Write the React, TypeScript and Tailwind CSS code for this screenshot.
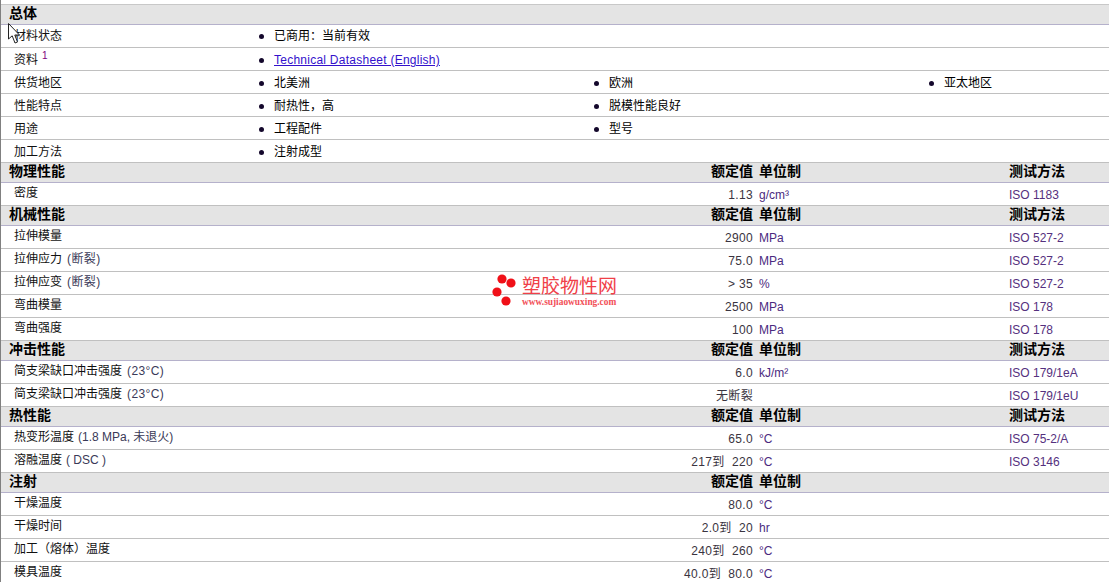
import React from "react"

const sans = "font-['Liberation_Sans','Noto_Sans_CJK_SC',sans-serif]"

function Head({ title, cols, test = true }: { title: string; cols?: boolean; test?: boolean }) {
  return (
    <div className="grid h-[20px] grid-cols-[752px_256px_1fr] items-center border-b border-[#b5b1cb] bg-[#e4e4e4] pb-[3px] text-[14px] leading-[16px] font-bold text-black">
      <div className="flex justify-between pl-[8px]">
        <span>{title}</span>
        {cols && <span>额定值</span>}
      </div>
      <span className="pl-[6px]">{cols && "单位制"}</span>
      <span>{cols && test && "测试方法"}</span>
    </div>
  )
}

function Info({ label, sup, first, items }: { label: string; sup?: boolean; first?: boolean; items: React.ReactNode[] }) {
  return (
    <div className={`grid h-[23px] grid-cols-[258px_335px_335px_1fr] items-center border-b border-[#c0c0c0] text-[12px] ${first ? "" : "pt-[2px]"}`}>
      <span className="pl-[13px] text-[#111]">
        {label}
        {sup && <sup className="ml-[4px] text-[10px] text-[#800080]">1</sup>}
      </span>
      {[0, 1, 2].map((i) => (
        <span key={i} className="flex items-center">
          {items[i] && <span className="mr-[10px] size-[5px] rounded-full bg-[#14082c]" />}
          {items[i]}
        </span>
      ))}
    </div>
  )
}

function Prop({ label, note, plainNote, value, unit, test }: { label: string; note?: string; plainNote?: string; value: string; unit?: string; test?: string }) {
  return (
    <div className="grid h-[23px] grid-cols-[752px_256px_1fr] items-center border-b border-[#c0c0c0] text-[12px]">
      <div className="flex justify-between pl-[13px]">
        <span className="-translate-y-[1px] text-[#111]">
          {label}
          {note && <span className="ml-[5px] tracking-[0.4px] text-[#3a3a58]">{note}</span>}
          {plainNote && <span className="ml-[4px] text-[#3a3a58]">{plainNote}</span>}
        </span>
        <span className="translate-y-[1px] tracking-[0.33px] whitespace-pre text-[#3a3440]">{value}</span>
      </div>
      <span className="translate-y-[1px] pl-[6px] text-[#4b2a80]">{unit}</span>
      <span className="translate-y-[1px] text-[#55307e]">{test}</span>
    </div>
  )
}

export default function App() {
  return (
    <div className={`relative h-[582px] w-[1109px] overflow-hidden border-l border-[#808080] bg-white pt-[4px] ${sans}`}>
      <div className="border-t border-[#c8c8c8]">
        <Head title="总体" />
        <Info first label="材料状态" items={["已商用：当前有效"]} />
        <Info label="资料" sup items={[<a className="tracking-[0.25px] text-[#3311cc] underline">Technical Datasheet (English)</a>]} />
        <Info label="供货地区" items={["北美洲", "欧洲", "亚太地区"]} />
        <Info label="性能特点" items={["耐热性，高", "脱模性能良好"]} />
        <Info label="用途" items={["工程配件", "型号"]} />
        <Info label="加工方法" items={["注射成型"]} />

        <Head title="物理性能" cols />
        <Prop label="密度" value="1.13" unit="g/cm³" test="ISO 1183" />

        <Head title="机械性能" cols />
        <Prop label="拉伸模量" value="2900" unit="MPa" test="ISO 527-2" />
        <Prop label="拉伸应力" note="(断裂)" value="75.0" unit="MPa" test="ISO 527-2" />
        <Prop label="拉伸应变" note="(断裂)" value="> 35" unit="%" test="ISO 527-2" />
        <Prop label="弯曲模量" value="2500" unit="MPa" test="ISO 178" />
        <Prop label="弯曲强度" value="100" unit="MPa" test="ISO 178" />

        <Head title="冲击性能" cols />
        <Prop label="简支梁缺口冲击强度" note="(23°C)" value="6.0" unit="kJ/m²" test="ISO 179/1eA" />
        <Prop label="简支梁缺口冲击强度" note="(23°C)" value="无断裂" test="ISO 179/1eU" />

        <Head title="热性能" cols />
        <Prop label="热变形温度" plainNote="(1.8 MPa, 未退火)" value="65.0" unit="°C" test="ISO 75-2/A" />
        <Prop label="溶融温度" plainNote="( DSC )" value="217到  220" unit="°C" test="ISO 3146" />

        <Head title="注射" cols test={false} />
        <Prop label="干燥温度" value="80.0" unit="°C" />
        <Prop label="干燥时间" value="2.0到  20" unit="hr" />
        <Prop label="加工（熔体）温度" value="240到  260" unit="°C" />
        <Prop label="模具温度" value="40.0到  80.0" unit="°C" />
      </div>

      {/* watermark */}
      <div className="absolute top-[274px] left-[491px] flex gap-[6px]">
        <svg width="24" height="34" viewBox="0 0 24 34">
          <circle cx="10" cy="5" r="4.6" fill="#f01018" />
          <circle cx="19" cy="9" r="4.6" fill="#f01018" />
          <circle cx="5" cy="18" r="4.6" fill="#f01018" />
          <circle cx="14" cy="27" r="4.6" fill="#f01018" />
        </svg>
        <div className="flex flex-col pt-[3px]">
          <span className="text-[19px] leading-[20px] text-[#f04048]">塑胶物性网</span>
          <span className="font-['Liberation_Serif',serif] text-[9.4px] leading-[10px] font-bold text-[#f25058]">www.sujiaowuxing.com</span>
        </div>
      </div>

      {/* mouse cursor */}
      <svg width="12" height="22" viewBox="0 0 12 22" className="absolute top-[23px] left-[7px]">
        <path d="M0.5 0.5 V16 L4.2 12.8 L7 20 L9.5 19 L6.8 12 H11.5 Z" fill="#fff" stroke="#222" strokeWidth="1" />
      </svg>
    </div>
  )
}
